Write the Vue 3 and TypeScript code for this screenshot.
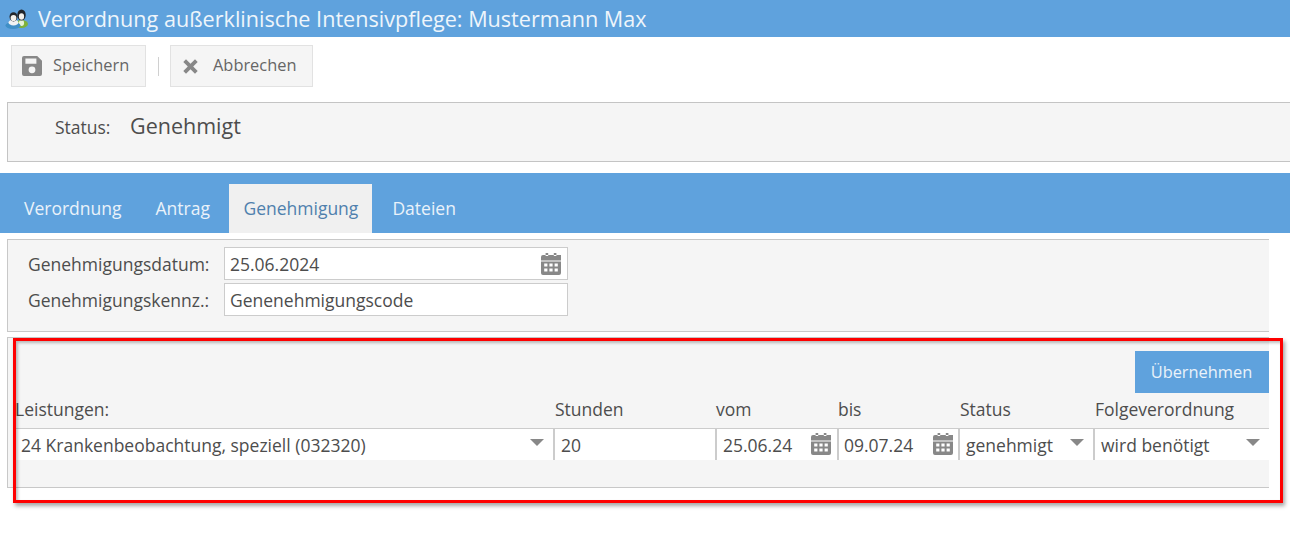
<script setup lang="ts">
interface Field {
  label: string
  value: string
  kind: 'select' | 'text' | 'date'
}
const fields: Field[] = [
  { label: 'Leistungen:', value: '24 Krankenbeobachtung, speziell (032320)', kind: 'select' },
  { label: 'Stunden', value: '20', kind: 'text' },
  { label: 'vom', value: '25.06.24', kind: 'date' },
  { label: 'bis', value: '09.07.24', kind: 'date' },
  { label: 'Status', value: 'genehmigt', kind: 'select' },
  { label: 'Folgeverordnung', value: 'wird benötigt', kind: 'select' }
]
const tabs = ['Verordnung', 'Antrag', 'Genehmigung', 'Dateien']
const calendarPath = 'M4.6 0h2.6v3H4.6zM12.8 0h2.6v3h-2.6zM2 2h18v0a0 0 0 0 1 0 0v5.4H0V4a2 2 0 0 1 2-2zM0 8.4h20V20a2 2 0 0 1-2 2H2a2 2 0 0 1-2-2zM3.2 10.6v3h3.2v-3zM8.4 10.6v3h3.2v-3zM13.6 10.6v3h3.2v-3zM3.2 15.4v3h3.2v-3zM8.4 15.4v3h3.2v-3zM13.6 15.4v3h3.2v-3z'
</script>

<template>
  <div class="page">
    <header class="title">
      <svg class="people" width="24" height="20" viewBox="0 0 24 20">
        <ellipse cx="16.5" cy="15" rx="6.5" ry="4" fill="#7fb23a" />
        <ellipse cx="16.5" cy="14" rx="2.6" ry="3" fill="#e8f3d8" />
        <ellipse cx="16.5" cy="6" rx="4.2" ry="5.6" fill="#20242a" />
        <ellipse cx="16.5" cy="7.5" rx="2.6" ry="3.2" fill="#f4f1ec" />
        <ellipse cx="8" cy="16.5" rx="7.5" ry="3.5" fill="#3f8fc7" />
        <ellipse cx="8.5" cy="13.5" rx="5" ry="3" fill="#f0f2f4" />
        <ellipse cx="8.5" cy="7.8" rx="4" ry="4.6" fill="#23262b" />
        <ellipse cx="8.5" cy="9" rx="2.9" ry="3.1" fill="#f4f1ec" />
      </svg>
      <span>Verordnung außerklinische Intensivpflege: Mustermann Max</span>
    </header>

    <div class="toolbar">
      <button class="tool save">
        <svg width="20" height="20" viewBox="0 0 20 20">
          <path fill="#888" fill-rule="evenodd" d="M2 0h13.2L20 4.8V18a2 2 0 0 1-2 2H2a2 2 0 0 1-2-2V2a2 2 0 0 1 2-2zM3.4 2.4v5.4h11V2.4zM10 10.4a3.4 3.4 0 1 0 0 6.8 3.4 3.4 0 0 0 0-6.8z" />
        </svg>
        <span>Speichern</span>
      </button>
      <i class="divider"></i>
      <button class="tool cancel">
        <svg width="15" height="15" viewBox="0 0 15 15">
          <path fill="#888" d="M3 .3 7.5 4.8 12 .3 14.7 3 10.2 7.5 14.7 12 12 14.7 7.5 10.2 3 14.7.3 12 4.8 7.5.3 3z" />
        </svg>
        <span>Abbrechen</span>
      </button>
    </div>

    <section class="status">
      <span class="status-label">Status:</span>
      <span class="status-value">Genehmigt</span>
    </section>

    <nav class="tabs">
      <a v-for="t in tabs" :key="t" class="tab" :class="{ active: t === 'Genehmigung', ['tab-' + t.toLowerCase()]: true }">{{ t }}</a>
    </nav>

    <section class="panel approval">
      <div class="form-row">
        <label>Genehmigungsdatum:</label>
        <div class="input date-input">
          <span>25.06.2024</span>
          <svg width="20" height="22" viewBox="0 0 20 22"><path fill="#888" fill-rule="evenodd" :d="calendarPath" /></svg>
        </div>
      </div>
      <div class="form-row">
        <label>Genehmigungskennz.:</label>
        <div class="input code-input"><span>Genenehmigungscode</span></div>
      </div>
    </section>

    <section class="panel services">
      <div class="action-row"><button class="apply">Übernehmen</button></div>
      <div class="grid">
        <div v-for="(f, i) in fields" :key="f.label" class="head" :class="{ tight: i === 2 || i === 3 }">{{ f.label }}</div>
        <div v-for="(f, i) in fields" :key="f.value" class="cell" :class="{ first: i === 0, until: i === 3, state: i === 4, last: i === 5 }">
          <span class="val">{{ f.value }}</span>
          <svg v-if="f.kind === 'date'" class="cal" width="20" height="22" viewBox="0 0 20 22"><path fill="#888" fill-rule="evenodd" :d="calendarPath" /></svg>
          <i v-if="f.kind === 'select'" class="caret"></i>
        </div>
      </div>
    </section>

    <div class="highlight"></div>
  </div>
</template>

<style>
html, body { margin: 0; background: #fff; overflow: hidden; }
</style>

<style scoped>
.page {
  position: relative;
  width: 1290px;
  height: 537px;
  overflow: hidden;
  font-family: "Open Sans", sans-serif;
  color: #4d4d4d;
  font-size: 17.5px;
}
.title {
  height: 37px;
  background: #5fa2dd;
  display: flex;
  align-items: center;
  padding-left: 5px;
  gap: 9px;
  color: #eef5fb;
  font-size: 21.6px;
  box-sizing: border-box;
}
.people { flex: none; margin-top: 1px; }
.toolbar {
  display: flex;
  align-items: center;
  padding: 8px 0 0 11px;
  height: 42px;
}
.tool {
  height: 42px;
  box-sizing: border-box;
  border: 1px solid #e2e2e2;
  background: #f5f5f5;
  font: inherit;
  font-size: 16.4px;
  color: #666;
  display: flex;
  align-items: center;
  padding: 0;
}
.tool span { padding-bottom: 3px; }
.save { width: 135px; padding-left: 10px; gap: 11px; }
.cancel { width: 143px; padding-left: 12px; gap: 15px; }
.divider { width: 1px; height: 19px; background: #d0d0d0; margin: 0 11px 0 12px; }
.status {
  margin: 15px 0 0 7px;
  height: 60px;
  box-sizing: border-box;
  border: 1px solid #c4c4c4;
  border-right: 0;
  background: #f5f5f5;
  padding: 8px 0 0 47px;
  display: flex;
  align-items: flex-start;
}
.status-label { width: 75px; margin-top: 4px; }
.status-value { font-size: 21.5px; }
.tabs {
  margin-top: 11px;
  height: 60px;
  background: #5fa2dd;
  display: flex;
  align-items: flex-end;
  padding-left: 10px;
  box-sizing: border-box;
  font-size: 17.5px;
}
.tab {
  height: 49px;
  display: flex;
  align-items: center;
  box-sizing: border-box;
  padding-bottom: 2px;
  color: #eaf2fa;
}
.tab-verordnung { padding-left: 14px; padding-right: 20px; }
.tab-antrag { padding-left: 14px; padding-right: 19.5px; }
.tab-genehmigung { padding-left: 14px; padding-right: 14px; width: 143px; }
.tab-dateien { padding-left: 20px; padding-right: 20px; }
.tab.active { background: #f0f0f0; color: #4f80ad; }
.panel {
  box-sizing: border-box;
  border: 1px solid #c8c8c8;
  border-right: 0;
  background: #f5f5f5;
  width: 1262px;
}
.approval {
  margin: 6px 0 0 7px;
  height: 93px;
  padding-top: 7px;
}
.form-row {
  display: flex;
  align-items: center;
  height: 33px;
  margin-bottom: 3px;
}
.form-row label {
  width: 216px;
  box-sizing: border-box;
  padding-left: 20px;
  flex: none;
}
.input {
  width: 344px;
  height: 33px;
  box-sizing: border-box;
  border: 1px solid #ccc;
  background: #fff;
  display: flex;
  align-items: center;
  justify-content: space-between;
  padding: 0 6px 0 5px;
}
.services {
  margin: 5px 0 0 7px;
  height: 151px;
  padding-top: 13px;
}
.action-row {
  display: flex;
  justify-content: flex-end;
  height: 42px;
}
.apply {
  width: 134px;
  height: 42px;
  border: 0;
  padding: 0 1px 2px 0;
  background: #5fa2dd;
  color: #eaf2fa;
  font: inherit;
  font-size: 16.4px;
}
.grid {
  display: grid;
  grid-template-columns: 545px 162px 122px 121px 135px 176px;
  grid-template-rows: 35px 32px;
}
.head {
  padding-left: 2px;
  padding-bottom: 4px;
  display: flex;
  align-items: center;
}
.head:first-child { padding-left: 7px; }
.head.tight { padding-left: 1px; }
.cell {
  box-sizing: border-box;
  display: flex;
  align-items: center;
  justify-content: space-between;
  background: #fff;
  border-top: 1px solid #ccc;
  border-left: 2px solid #ccc;
  padding: 0 6px 0 6px;
}
.cell.first { border-left: 0; margin-left: 7px; padding-left: 6px; padding-right: 9px; }
.cell.until { padding-left: 5px; padding-right: 5px; }
.cell.state { padding-right: 9px; }
.cell.last { padding-right: 9px; }
.val { white-space: nowrap; }
.caret {
  width: 0;
  height: 0;
  border-left: 7px solid transparent;
  border-right: 7px solid transparent;
  border-top: 7px solid #888;
  margin-top: -5px;
}
.cal { margin-top: -2px; }
.highlight {
  position: absolute;
  left: 13px;
  top: 338px;
  width: 1270px;
  height: 165px;
  box-sizing: border-box;
  border: 3px solid #fe0000;
  box-shadow: 2px 3px 4px rgba(0, 0, 0, 0.35), inset 2px 2px 3px rgba(0, 0, 0, 0.25);
  pointer-events: none;
}
</style>
